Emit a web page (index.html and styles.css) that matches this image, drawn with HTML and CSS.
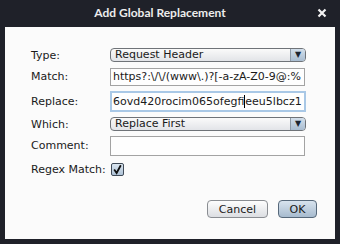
FILE: index.html
```html
<!DOCTYPE html>
<html lang="en">
  <head>
    <meta charset="UTF-8" />
    <title>Add Global Replacement</title>
    <link rel="stylesheet" href="styles.css">
  </head>
  <body>
    <div class="window">
      <div class="titlebar">
        <span class="title">Add Global Replacement</span>
        <span class="close">
          <svg width="10" height="10" viewBox="0 0 10 10">
            <path d="M1.5 1.5 L8.5 8.5 M8.5 1.5 L1.5 8.5" stroke="#f2f2f2" stroke-width="2.2" />
          </svg>
        </span>
      </div>
      <div class="panel">
        <div class="row row-type">
          <label class="lbl">Type:</label>
          <div class="combo">
            <span class="combo-text">Request Header</span>
            <span class="combo-arrow">&#9660;</span>
          </div>
        </div>
        <div class="row row-match">
          <label class="lbl">Match:</label>
          <div class="field field-match"><span class="field-text">https?:\/\/(www\.)?[-a-zA-Z0-9@:%</span></div>
        </div>
        <div class="row row-replace">
          <label class="lbl">Replace:</label>
          <div class="field field-focus"><span class="field-text">6ovd420rocim065ofegfi<span class="caret"></span>eeu5lbcz1</span></div>
        </div>
        <div class="row row-which">
          <label class="lbl">Which:</label>
          <div class="combo">
            <span class="combo-text">Replace First</span>
            <span class="combo-arrow">&#9660;</span>
          </div>
        </div>
        <div class="row row-comment">
          <label class="lbl">Comment:</label>
          <div class="field field-comment"></div>
        </div>
        <div class="row row-regex">
          <label class="lbl">Regex Match:</label>
          <span class="check">
            <svg width="11" height="11" viewBox="0 0 11 11">
              <path d="M2.2 5.6 L4.6 9 L8.8 1.2" fill="none" stroke="#111" stroke-width="1.8" />
            </svg>
          </span>
        </div>
        <div class="buttons">
          <button class="btn">Cancel</button>
          <button class="btn btn-default">OK</button>
        </div>
      </div>
    </div>
  </body>
</html>
```

FILE: styles.css
```css
html, body {
  margin: 0;
  padding: 0;
  background-color: #1f2129;
}
.window {
  width: 340px;
  height: 244px;
  background-color: #1f2129;
  display: flex;
  flex-direction: column;
  font-family: "DejaVu Sans", sans-serif;
  font-size: 11px;
  color: #1a1a1a;
}
.titlebar {
  height: 27px;
  display: flex;
  align-items: center;
  justify-content: center;
  position: relative;
}
.title {
  font-family: "Lato", sans-serif;
  font-weight: bold;
  font-size: 12px;
  color: #ececec;
  margin-left: -20px;
  margin-top: -2px;
}
.close {
  position: absolute;
  right: 13px;
  top: 8px;
  width: 10px;
  height: 10px;
  display: flex;
}
.panel {
  margin: 0 5px;
  height: 212px;
  background-color: #fbfbfb;
  padding: 18px 0 0 26px;
  box-sizing: border-box;
}
.row {
  display: flex;
  align-items: center;
}
.lbl {
  width: 79px;
  flex-shrink: 0;
}
.row-type { height: 20px; }
.row-match { height: 23px; }
.row-replace { height: 26px; }
.row-which { height: 22px; margin-top: -1px; }
.row-comment { height: 21px; }
.row-regex { height: 27px; }
.combo {
  width: 196px;
  height: 14px;
  box-sizing: border-box;
  border: 1px solid #6f7378;
  border-radius: 4px;
  background: linear-gradient(#fafafa, #e2e4e8);
  display: flex;
  align-items: center;
  overflow: hidden;
}
.combo-text {
  flex: 1;
  padding-left: 4px;
  line-height: 12px;
}
.combo-arrow {
  width: 14px;
  height: 12px;
  border-left: 1px solid #8d9aa8;
  background: linear-gradient(#d3dfeb, #a9bdd1);
  font-size: 8px;
  line-height: 12px;
  text-align: center;
  color: #1b2530;
}
.field {
  width: 196px;
  box-sizing: border-box;
  border: 1px solid #a3a3a3;
  background-color: #fefefe;
  display: flex;
  align-items: center;
  overflow: hidden;
  white-space: nowrap;
}
.field-match { height: 18px; width: 195px; }
.field-focus {
  height: 21px;
  border: 2px solid #a9c8e6;
}
.field-comment { height: 20px; width: 195px; }
.field-text {
  padding-left: 2px;
}
.field-focus .field-text {
  padding-left: 1px;
}
.caret {
  display: inline-block;
  width: 1px;
  height: 13px;
  background-color: #000;
  vertical-align: -3px;
}
.check {
  width: 13px;
  height: 13px;
  box-sizing: border-box;
  border: 1px solid #3f4a57;
  border-radius: 2px;
  background: linear-gradient(#dbe6f0, #aec2d6);
  display: flex;
  align-items: center;
  justify-content: center;
  margin-left: 1px;
}
.buttons {
  display: flex;
  justify-content: flex-end;
  gap: 10px;
  margin-top: 17px;
  padding-right: 18px;
}
.btn {
  height: 18px;
  padding: 0;
  font-family: "DejaVu Sans", sans-serif;
  font-size: 11px;
  color: #1a1a1a;
  border: 1px solid #8a8d92;
  border-radius: 4px;
  background: linear-gradient(#fdfdfd, #dcdee2);
  width: 61px;
}
.btn-default {
  width: 39px;
  border-color: #56687a;
  background: linear-gradient(#d8e3ee, #a7bbcf);
}
```
